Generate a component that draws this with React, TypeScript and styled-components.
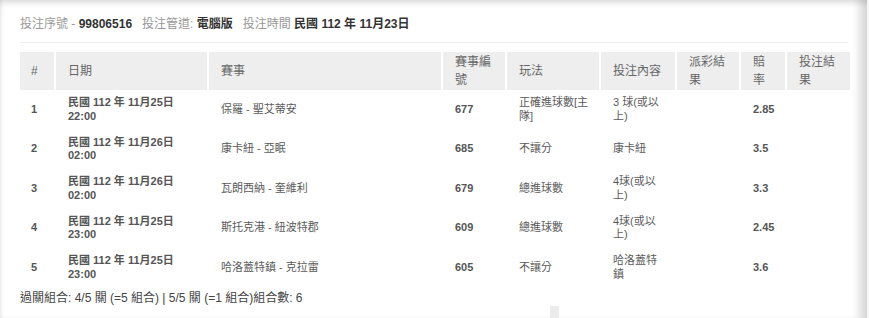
import * as React from "react"
import styled, { createGlobalStyle } from "styled-components"

const GlobalStyle = createGlobalStyle`
  html, body {
    margin: 0;
    padding: 0;
    background: #fff;
  }
  body {
    font-family: "Liberation Sans", Arial, "Noto Sans CJK TC", sans-serif;
  }
`

const Panel = styled.div`
  position: relative;
  box-sizing: border-box;
  width: 869px;
  height: 318px;
  overflow: hidden;
  padding: 14px 19px 0 20px;
  background: #fff;
  border-right: 2px solid #f6f6f6;
  box-shadow: inset 0 7px 6px -4px rgba(0, 0, 0, 0.13),
    inset 4px 0 4px -3px rgba(0, 0, 0, 0.1),
    inset -13px 0 10px -6px rgba(0, 0, 0, 0.16);
`

const InfoRow = styled.div`
  display: flex;
  gap: 10px;
  font-size: 12px;
  line-height: 20px;
  padding-bottom: 8px;
  border-bottom: 1px solid #eee;
  margin-bottom: 9px;
`

const InfoItem = styled.span`
  color: #999;
`

const InfoValue = styled.b`
  color: #333;
  font-weight: bold;
`

const Table = styled.table`
  width: 830px;
  table-layout: fixed;
  border-collapse: collapse;
  color: #555;
`

const HeadCell = styled.th`
  height: 38px;
  box-sizing: border-box;
  padding: 1px 10px 1px 12px;
  background: #eee;
  border-left: 2px solid #fff;
  text-align: left;
  font-weight: normal;
  font-size: 12px;
  line-height: 18px;
  color: #666;
  vertical-align: middle;

  &:first-child {
    border-left: none;
    padding-left: 11px;
  }
`

const Cell = styled.td<{ $bold?: boolean }>`
  padding: 6px 10px 6px 12px;
  border-left: 2px solid transparent;
  font-size: 11px;
  line-height: 1.25;
  font-weight: ${(p) => (p.$bold ? "bold" : "normal")};
  color: ${(p) => (p.$bold ? "#555" : "#5a5a5a")};
  vertical-align: middle;
  word-break: break-all;

  &:first-child {
    border-left: none;
    padding-left: 11px;
  }
`

const Footer = styled.div`
  font-size: 12px;
  line-height: 18px;
  color: #444;
  margin-top: 1px;
`

const Stub = styled.div`
  width: 9px;
  height: 14px;
  margin: -1px 0 0 530px;
  background: #ececec;
`

const cols = [35, 153, 234, 64, 94, 76, 64, 46, 64]
const heads = ["#", "日期", "賽事", "賽事編號", "玩法", "投注內容", "派彩結果", "賠率", "投注結果"]

const rows = [
  { date: "民國 112 年 11月25日", time: "22:00", match: "保羅 - 聖艾蒂安", code: "677", play: "正確進球數[主隊]", bet: "3 球(或以上)", odds: "2.85" },
  { date: "民國 112 年 11月26日", time: "02:00", match: "康卡紐 - 亞眠", code: "685", play: "不讓分", bet: "康卡紐", odds: "3.5" },
  { date: "民國 112 年 11月26日", time: "02:00", match: "瓦朗西納 - 奎維利", code: "679", play: "總進球數", bet: "4球(或以上)", odds: "3.3" },
  { date: "民國 112 年 11月25日", time: "23:00", match: "斯托克港 - 紐波特郡", code: "609", play: "總進球數", bet: "4球(或以上)", odds: "2.45" },
  { date: "民國 112 年 11月25日", time: "23:00", match: "哈洛蓋特鎮 - 克拉雷", code: "605", play: "不讓分", bet: "哈洛蓋特鎮", odds: "3.6" },
]

export default function App() {
  return (
    <>
      <GlobalStyle />
      <Panel>
        <InfoRow>
          <InfoItem>
            投注序號 - <InfoValue>99806516</InfoValue>
          </InfoItem>
          <InfoItem>
            投注管道: <InfoValue>電腦版</InfoValue>
          </InfoItem>
          <InfoItem>
            投注時間 <InfoValue>民國 112 年 11月23日</InfoValue>
          </InfoItem>
        </InfoRow>

        <Table>
          <colgroup>
            {cols.map((w, i) => (
              <col key={i} style={{ width: w }} />
            ))}
          </colgroup>
          <thead>
            <tr>
              {heads.map((h) => (
                <HeadCell key={h}>{h}</HeadCell>
              ))}
            </tr>
          </thead>
          <tbody>
            {rows.map((r, i) => (
              <tr key={i}>
                <Cell $bold>{i + 1}</Cell>
                <Cell $bold>
                  {r.date}
                  <br />
                  {r.time}
                </Cell>
                <Cell>{r.match}</Cell>
                <Cell $bold>{r.code}</Cell>
                <Cell>{r.play}</Cell>
                <Cell>{r.bet}</Cell>
                <Cell />
                <Cell $bold>{r.odds}</Cell>
                <Cell />
              </tr>
            ))}
          </tbody>
        </Table>

        <Footer>過關組合: 4/5 關 (=5 組合) | 5/5 關 (=1 組合)組合數: 6</Footer>
        <Stub />
      </Panel>
    </>
  )
}
